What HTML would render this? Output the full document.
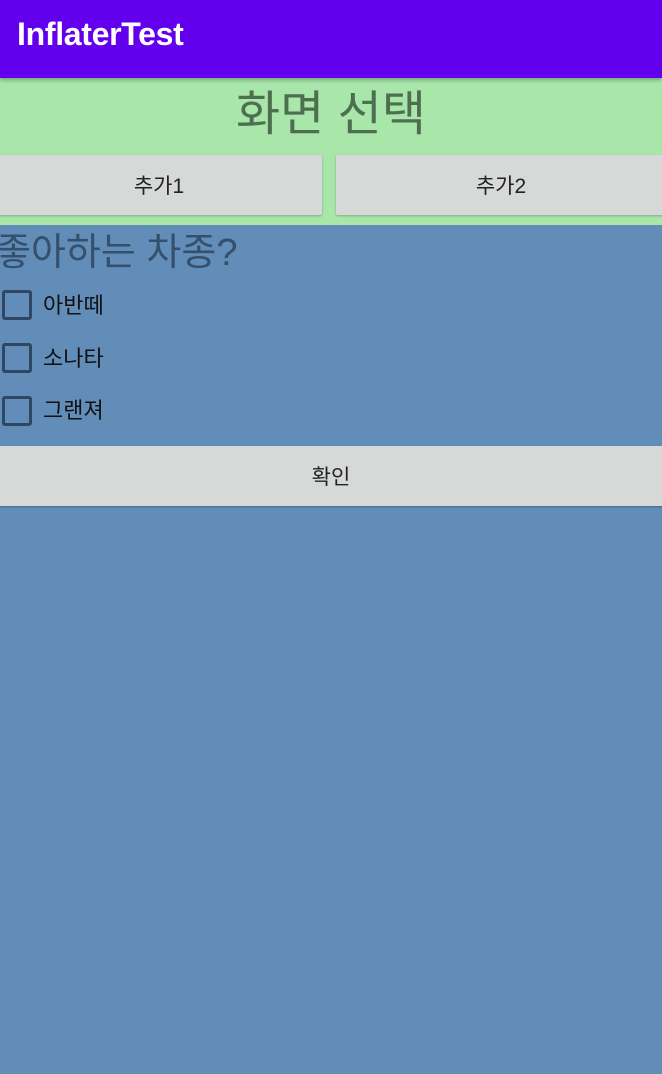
<!DOCTYPE html>
<html><head><meta charset="utf-8"><style>
body{margin:0;width:662px;height:1074px;overflow:hidden;background:#628db8;font-family:"Liberation Sans","Noto Sans CJK KR",sans-serif;position:relative}
.bar{position:absolute;left:0;top:0;width:662px;height:78px;background:#6200ee;box-shadow:0 2px 4px rgba(0,0,0,.3);z-index:2}
.bar span{position:absolute;left:17px;top:16px;color:#fff;font-size:32px;font-weight:bold;letter-spacing:-0.3px}
.green{position:absolute;left:0;top:78px;width:662px;height:147px;background:#a8e6aa}
.title{position:absolute;left:0;width:662px;top:85px;text-align:center;font-size:48px;color:#4e6e50;line-height:60px}
.btn{position:absolute;background:#d7d8d8;border-radius:2px;box-shadow:0 1px 2px rgba(0,0,0,.25);text-align:center;font-size:21px;color:#222;line-height:64px;height:60px}
.q{position:absolute;left:-4px;top:228px;font-size:38px;color:#35506c;line-height:50px}
.cb{position:absolute;left:2px;width:24px;height:24px;border:3px solid #2e4863;border-radius:3px}
.lab{position:absolute;left:43px;font-size:22px;color:#111;line-height:30px}
</style></head><body>
<div class="bar"><span>InflaterTest</span></div>
<div class="green"></div>
<div class="title">화면 선택</div>
<div class="btn" style="left:-4px;top:155px;width:326px">추가1</div>
<div class="btn" style="left:336px;top:155px;width:330px">추가2</div>
<div class="q">좋아하는 차종?</div>
<div class="cb" style="top:290px"></div><div class="lab" style="top:291px">아반떼</div>
<div class="cb" style="top:343px"></div><div class="lab" style="top:344px">소나타</div>
<div class="cb" style="top:396px"></div><div class="lab" style="top:396px">그랜져</div>
<div class="btn" style="left:-4px;top:446px;width:670px">확인</div>
</body></html>
